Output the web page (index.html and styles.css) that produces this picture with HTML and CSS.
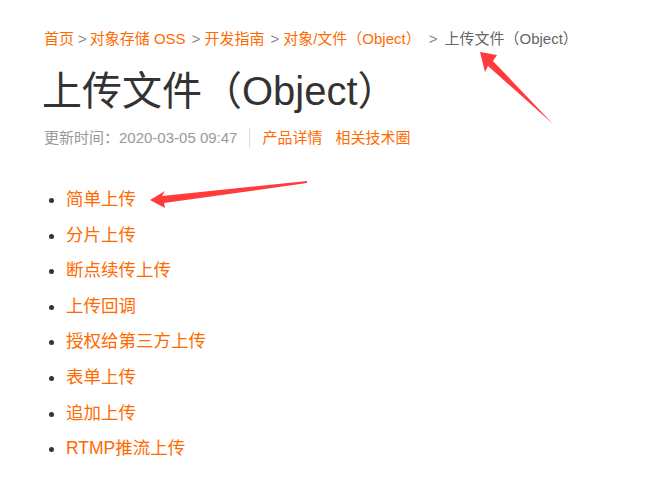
FILE: index.html
```html
<!DOCTYPE html>
<html lang="zh-CN">
<head>
<meta charset="utf-8">
<title>上传文件（Object）</title>
<link rel="stylesheet" href="styles.css">
</head>
<body>
<div class="page">
  <nav class="crumbs">
    <a href="#">首页</a><span class="sep">&gt;</span><a href="#">对象存储 OSS</a><span class="sep sep-wide">&gt;</span><a href="#">开发指南</a><span class="sep sep-wide">&gt;</span><a href="#">对象/文件（Object）</a><span class="sep sep-last">&gt;</span><span class="current">上传文件（Object）</span>
  </nav>
  <h1 class="title">上传文件（Object）</h1>
  <div class="meta">
    <span class="updated">更新时间：2020-03-05 09:47</span>
    <span class="divider"></span>
    <a href="#">产品详情</a>
    <a href="#">相关技术圈</a>
  </div>
  <ul class="toc">
    <li><a href="#">简单上传</a></li>
    <li><a href="#">分片上传</a></li>
    <li><a href="#">断点续传上传</a></li>
    <li><a href="#">上传回调</a></li>
    <li><a href="#">授权给第三方上传</a></li>
    <li><a href="#">表单上传</a></li>
    <li><a href="#">追加上传</a></li>
    <li><a href="#">RTMP推流上传</a></li>
  </ul>
</div>
<svg class="arrows" width="658" height="478" viewBox="0 0 658 478" aria-hidden="true">
  <polygon points="480,52 497,55 493,61 553,124 488,66 485,72" fill="#ff3b3b"/>
  <polygon points="150,200 165,191 162,196 307,181 307,183 164,203 165,208" fill="#ff3b3b"/>
</svg>
</body>
</html>
```

FILE: styles.css
```css
html, body {
  margin: 0;
  padding: 0;
  background: #fff;
}
body {
  font-family: "Liberation Sans", Arial, "Noto Sans CJK SC", sans-serif;
  color: #333;
  position: relative;
  width: 658px;
  height: 478px;
  overflow: hidden;
}
a {
  color: #ff6a00;
  text-decoration: none;
}
.page {
  padding: 29px 0 0 44px;
}
.crumbs {
  font-size: 15px;
  line-height: 20px;
  white-space: nowrap;
}
.crumbs .sep {
  color: #888;
  margin: 0 3px 0 4px;
}
.crumbs .sep-wide {
  margin-left: 6px;
  margin-right: 4px;
}
.crumbs .sep-last {
  margin-left: 8px;
  margin-right: 7px;
}
.crumbs .current {
  color: #666;
}
.title {
  margin: 18px 0 0 -2px;
  font-size: 40px;
  line-height: 48px;
  font-weight: normal;
  color: #333;
}
.meta {
  margin-top: 13px;
  display: flex;
  align-items: center;
  font-size: 15px;
  line-height: 20px;
  color: #999;
}
.meta .divider {
  width: 1px;
  height: 20px;
  background: #ddd;
  margin: 0 12px 0 12px;
}
.meta a + a {
  margin-left: 13px;
}
.toc {
  margin: 39px 0 0;
  padding: 0 0 0 22px;
  font-size: 17.5px;
  line-height: 24px;
  color: #333;
}
.toc li {
  margin-bottom: 11.6px;
}
.arrows {
  position: absolute;
  left: 0;
  top: 0;
}
```
